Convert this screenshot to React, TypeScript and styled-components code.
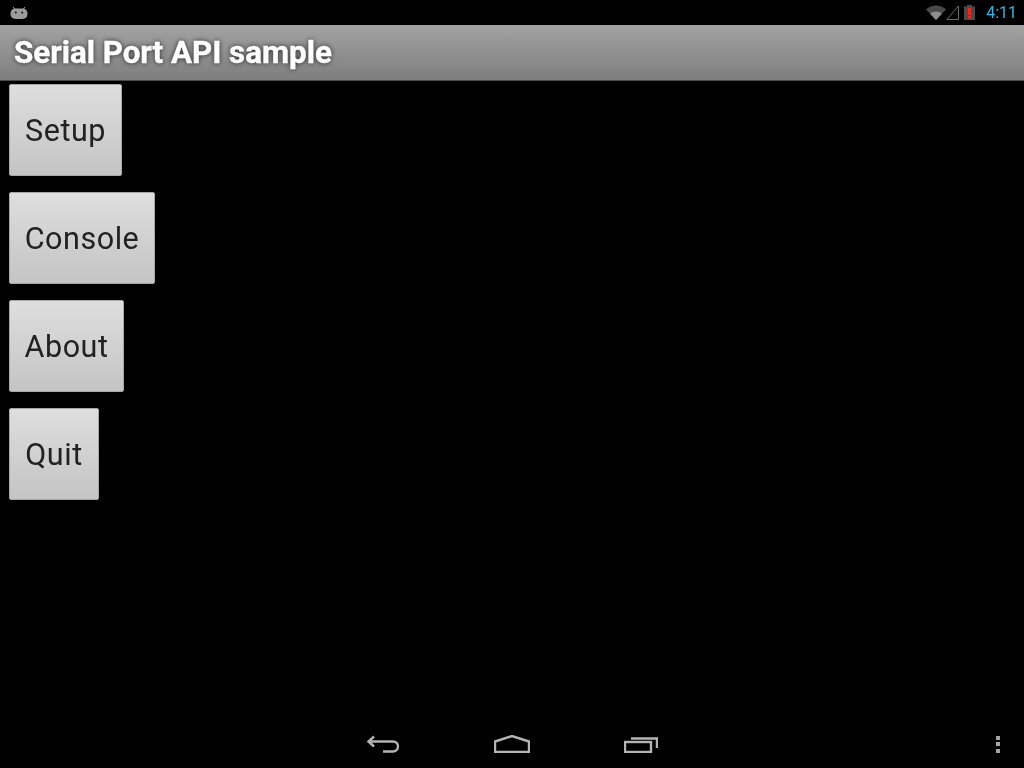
import React from "react";
import styled, { createGlobalStyle } from "styled-components";

const Global = createGlobalStyle`
  html, body { margin: 0; padding: 0; background: #000; }
  #root { width: 1024px; height: 768px; overflow: hidden; }
`;

const Screen = styled.div`
  width: 1024px;
  height: 768px;
  display: flex;
  flex-direction: column;
  background: #000;
  font-family: Roboto, "Liberation Sans", sans-serif;
`;

const StatusBar = styled.div`
  height: 25px;
  flex: none;
  display: flex;
  align-items: center;
  justify-content: space-between;
  padding: 0 7px 0 10px;
  box-sizing: border-box;
`;

const StatusRight = styled.div`
  display: flex;
  align-items: center;
`;

const Clock = styled.span`
  margin-left: 11px;
  font-size: 16px;
  line-height: 25px;
  color: #33b5e5;
  filter: blur(0.5px);
`;

const TitleBar = styled.div`
  height: 56px;
  flex: none;
  box-sizing: border-box;
  display: flex;
  align-items: center;
  padding: 0 0 1px 14px;
  background: linear-gradient(#a2a2a2, #7e7e7e);
  border-bottom: 1px solid #4c4c4c;
`;

const Title = styled.h1`
  margin: 0;
  font-size: 31.3px;
  font-weight: 700;
  color: #fff;
  -webkit-text-stroke: 0.4px #fff;
  text-shadow: 0 0 5px rgba(20, 20, 20, 0.9);
  filter: blur(0.6px);
`;

const Menu = styled.div`
  flex: 1;
  display: flex;
  flex-direction: column;
  align-items: flex-start;
  gap: 16px;
  padding: 3px 0 0 9px;
`;

const MenuButton = styled.button<{ $width: number }>`
  width: ${(p) => p.$width}px;
  height: 92px;
  padding: 0;
  box-sizing: border-box;
  border: 1px solid #a8a8a8;
  border-radius: 2px;
  background: linear-gradient(#dedede, #c4c4c4);
  color: #222;
  font-family: inherit;
  font-size: 30.5px;
  letter-spacing: 0.55px;
  text-align: center;
  filter: blur(0.5px);
`;

const ButtonLabel = styled.span`
  display: block;
  filter: blur(0.5px);
`;

const NavBar = styled.div`
  height: 48px;
  flex: none;
  display: grid;
  grid-template-columns: 1fr auto 1fr;
  align-items: center;
  padding: 0 24px 0 0;
`;

const NavKeys = styled.div`
  grid-column: 2;
  display: flex;
  align-items: center;
  gap: 94px;
  margin-left: 24px;
  filter: blur(0.5px);
`;

const OverflowDots = styled.div`
  grid-column: 3;
  justify-self: end;
  display: flex;
  flex-direction: column;
  gap: 2.5px;
`;

const Dot = styled.span`
  width: 4px;
  height: 4px;
  background: #a4a4a4;
  filter: blur(0.3px);
`;

const Icon = styled.svg`
  display: block;
  flex: none;
`;

const BatteryGlyph = styled(Icon)`
  margin-left: 5px;
`;

const AndroidIcon = () => (
  <Icon width="18" height="14" viewBox="0 0 18 14">
    <path d="M3 1l2 2.5M15 1l-2 2.5" stroke="#9c9c9c" strokeWidth="1" fill="none" />
    <path d="M5 2.5h8c2.8 0 4.5 2.5 4.5 5.3 0 3.4-2.3 5.2-5 5.2h-7c-2.7 0-5-1.8-5-5.2C.5 5 2.2 2.5 5 2.5z" fill="#9c9c9c" />
    <circle cx="5.8" cy="6.6" r="1.1" fill="#222" />
    <circle cx="12.2" cy="6.6" r="1.1" fill="#222" />
  </Icon>
);

const WifiIcon = () => (
  <Icon width="20" height="15" viewBox="0 0 20 15">
    <path d="M0 4.5C5.500-.9 14.500-.9 20 4.500L10 15z" fill="#4a4a4a" />
    <path d="M4 8.800c3.400-3 8.600-3 12 0L10 15z" fill="#8e8e8e" />
  </Icon>
);

const SignalIcon = () => (
  <Icon width="13" height="15" viewBox="0 0 13 15">
    <path d="M12.500.9V14.500H.9z" fill="none" stroke="#6a6a6a" strokeWidth="1" />
  </Icon>
);

const BatteryIcon = () => (
  <BatteryGlyph width="11" height="15" viewBox="0 0 11 15">
    <path d="M3 0h5v1.500h3V15H0V1.500h3z" fill="#4a4a4a" />
    <rect x="4" y="3" width="3" height="7" fill="#f0281c" />
    <rect x="4" y="11" width="3" height="2.500" fill="#f0281c" />
  </BatteryGlyph>
);

const BackIcon = () => (
  <Icon width="33" height="18" viewBox="0 0 33 18">
    <path
      d="M7 1.500L1.500 6.500L7 11.500M1.500 6.500H26c3 0 5 2 5 4.700s-2 5.300-5 5.300H16"
      fill="none"
      stroke="#b4b4b4"
      strokeWidth="2.400"
    />
  </Icon>
);

const HomeIcon = () => (
  <Icon width="36" height="18" viewBox="0 0 36 18">
    <path d="M1 17V6.500L18 1l17 5.500V17z" fill="none" stroke="#b4b4b4" strokeWidth="2.400" />
  </Icon>
);

const RecentIcon = () => (
  <Icon width="34" height="17" viewBox="0 0 34 17">
    <rect x="1" y="6" width="26" height="10" fill="none" stroke="#b4b4b4" strokeWidth="2.400" />
    <path d="M7 2.500h26V12" fill="none" stroke="#b4b4b4" strokeWidth="2.400" />
  </Icon>
);

const buttons = [
  { label: "Setup", width: 113 },
  { label: "Console", width: 146 },
  { label: "About", width: 115 },
  { label: "Quit", width: 90 },
];

export default function App() {
  return (
    <Screen>
      <Global />
      <StatusBar>
        <AndroidIcon />
        <StatusRight>
          <WifiIcon />
          <SignalIcon />
          <BatteryIcon />
          <Clock>4:11</Clock>
        </StatusRight>
      </StatusBar>
      <TitleBar>
        <Title>Serial Port API sample</Title>
      </TitleBar>
      <Menu>
        {buttons.map((b) => (
          <MenuButton key={b.label} $width={b.width}>
            <ButtonLabel>{b.label}</ButtonLabel>
          </MenuButton>
        ))}
      </Menu>
      <NavBar>
        <NavKeys>
          <BackIcon />
          <HomeIcon />
          <RecentIcon />
        </NavKeys>
        <OverflowDots>
          <Dot />
          <Dot />
          <Dot />
        </OverflowDots>
      </NavBar>
    </Screen>
  );
}
